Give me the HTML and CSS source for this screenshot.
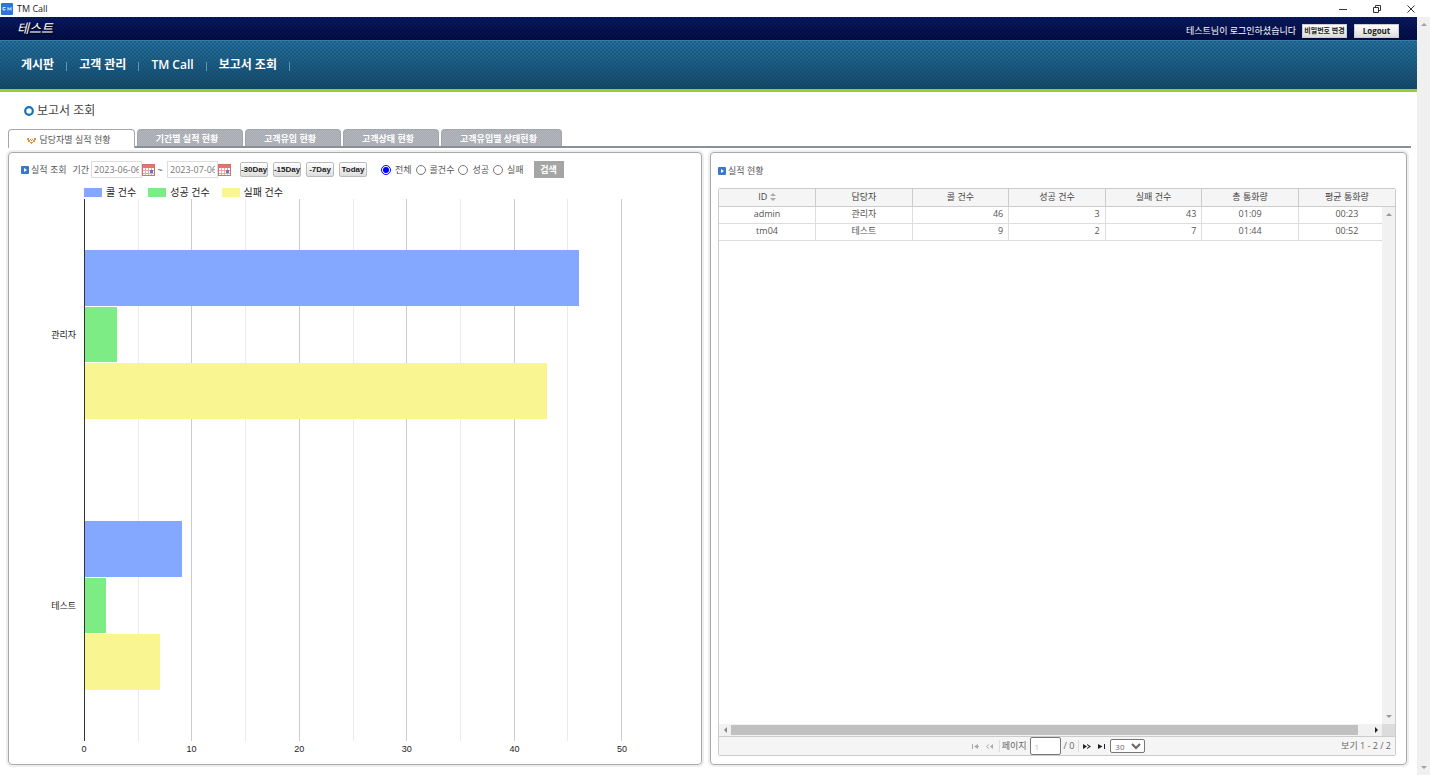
FILE: index.html
```html
<!DOCTYPE html>
<html lang="ko">
<head>
<meta charset="utf-8">
<title>TM Call</title>
<link rel="stylesheet" href="styles.css">
</head>
<body>
<div class="titlebar">
  <svg class="app-icon" viewBox="0 0 12 12"><rect width="12" height="12" rx="1" fill="#2f73de"/><path d="M4.500 4.500H2v2.500h2V6M7 7.500v-3l1.500 2 1.500-2v3" fill="none" stroke="#dcecff"/></svg>
  <span class="app-name">TM Call</span>
  <div class="window-controls">
    <button type="button" aria-label="Minimize"><svg viewBox="0 0 10 10"><path d="M1 5.500h8" /></svg></button>
    <button type="button" aria-label="Restore"><svg viewBox="0 0 10 10"><path d="M1.500 3.500h5v5h-5zM3.500 3V1.500h5v5H7" /></svg></button>
    <button type="button" aria-label="Close"><svg viewBox="0 0 10 10"><path d="M1.500 1.500l7 7M8.500 1.500l-7 7" /></svg></button>
  </div>
</div>
<div class="viewport">
  <div class="page">
    <header class="topbar">
      <div class="logo">테스트</div>
      <div class="user">
        <span class="greeting">테스트님이 로그인하셨습니다</span>
        <button type="button" class="top-button">비밀번호 변경</button>
        <button type="button" class="top-button logout">Logout</button>
      </div>
    </header>
    <nav class="menu">
      <a href="#board">게시판</a><a href="#customers">고객 관리</a><a href="#tmcall">TM Call</a><a href="#reports">보고서 조회</a>
    </nav>
    <main class="content">
      <h1 class="page-title"><svg viewBox="0 0 10 10"><circle cx="5" cy="5" r="3.800" fill="#fff" stroke="#1672b8" stroke-width="2.200"/></svg>보고서 조회</h1>
      <div class="tabs">
        <button type="button" class="tab active"><svg viewBox="0 0 9 6"><path d="M0 0h2v2H0zM7 0h2v2H7zM3 1h1v1H3zM5 1h1v1H5zM1 2h2v2H1zM6 2h2v2H6zM4 2h1v1H4zM3 4h3v1H3zM4 5h1v1H4z" fill="#e8943a"/></svg>담당자별 실적 현황</button>
        <button type="button" class="tab tab-m">기간별 실적 현황</button>
        <button type="button" class="tab tab-s">고객유입 현황</button>
        <button type="button" class="tab tab-s">고객상태 현황</button>
        <button type="button" class="tab tab-l">고객유입별 상태현황</button>
      </div>
      <div class="panels">
        <section class="panel chart-panel">
          <form class="filter">
            <h2 class="section-title"><svg viewBox="0 0 8 8"><rect width="8" height="8" rx="1" fill="#3a78cc"/><path d="M3 2l3 2-3 2z" fill="#fff"/></svg>실적 조회</h2>
            <div class="period">
              <label for="from">기간</label>
              <input id="from" class="date" type="text" value="2023-06-06">
              <button type="button" class="calendar" aria-label="시작일"><svg viewBox="0 0 13 12"><rect x=".5" y=".5" width="12" height="11" fill="#fff" stroke="#d47070"/><path d="M1 1h11v3H1z" fill="#df7770"/><path d="M1 6.500h11M1 9.500h11M3.500 4v7M6.500 4v7M9.500 4v7" stroke="#e6aaa8"/><path d="M8 6h3v3H8z" fill="#6677bd"/></svg></button>
              <span class="tilde">~</span>
              <input class="date" type="text" value="2023-07-06" aria-label="종료일">
              <button type="button" class="calendar" aria-label="종료일 선택"><svg viewBox="0 0 13 12"><rect x=".5" y=".5" width="12" height="11" fill="#fff" stroke="#d47070"/><path d="M1 1h11v3H1z" fill="#df7770"/><path d="M1 6.500h11M1 9.500h11M3.500 4v7M6.500 4v7M9.500 4v7" stroke="#e6aaa8"/><path d="M8 6h3v3H8z" fill="#6677bd"/></svg></button>
            </div>
            <div class="presets">
              <button type="button">-30Day</button>
              <button type="button">-15Day</button>
              <button type="button">-7Day</button>
              <button type="button">Today</button>
            </div>
            <div class="kinds">
              <label><input type="radio" name="kind" checked>전체</label>
              <label><input type="radio" name="kind">콜건수</label>
              <label><input type="radio" name="kind">성공</label>
              <label><input type="radio" name="kind">실패</label>
            </div>
            <button type="submit" class="search">검색</button>
          </form>
          <div class="chart">
            <ul class="legend">
              <li><i class="swatch calls"></i>콜 건수</li>
              <li><i class="swatch wins"></i>성공 건수</li>
              <li><i class="swatch fails"></i>실패 건수</li>
            </ul>
            <div class="names"><span>관리자</span><span>테스트</span></div>
            <div class="plot">
              <div class="grid"><i></i><i></i><i></i><i></i><i></i><i></i><i></i><i></i><i></i><i></i></div>
              <div class="group">
                <div class="bar calls" style="width:92%"></div>
                <div class="bar wins" style="width:6%"></div>
                <div class="bar fails" style="width:86%"></div>
              </div>
              <div class="group">
                <div class="bar calls" style="width:18%"></div>
                <div class="bar wins" style="width:4%"></div>
                <div class="bar fails" style="width:14%"></div>
              </div>
            </div>
            <div class="axis"><span>0</span><span>10</span><span>20</span><span>30</span><span>40</span><span>50</span></div>
          </div>
        </section>
        <section class="panel table-panel">
          <h2 class="section-title"><svg viewBox="0 0 8 8"><rect width="8" height="8" rx="1" fill="#3a78cc"/><path d="M3 2l3 2-3 2z" fill="#fff"/></svg>실적 현황</h2>
          <div class="datagrid">
            <table>
              <thead>
                <tr><th>ID <svg class="sort" viewBox="0 0 6 8"><path d="M0 3l3-3 3 3zM0 5l3 3 3-3z" fill="#aaa"/></svg></th><th>담당자</th><th>콜 건수</th><th>성공 건수</th><th>실패 건수</th><th>총 통화량</th><th>평균 통화량</th></tr>
              </thead>
              <tbody>
                <tr><td>admin</td><td>관리자</td><td class="num">46</td><td class="num">3</td><td class="num">43</td><td>01:09</td><td>00:23</td></tr>
                <tr><td>tm04</td><td>테스트</td><td class="num">9</td><td class="num">2</td><td class="num">7</td><td>01:44</td><td>00:52</td></tr>
              </tbody>
            </table>
            <div class="vscroll"><svg viewBox="0 0 6 4"><path d="M0 4l3-3 3 3z"/></svg><svg viewBox="0 0 6 4"><path d="M0 0l3 3 3-3z"/></svg></div>
            <div class="hscroll"><svg viewBox="0 0 4 6"><path d="M4 0L1 3l3 3z"/></svg><div class="thumb"></div><svg class="dark" viewBox="0 0 4 6"><path d="M0 0l3 3-3 3z"/></svg><div class="corner"></div></div>
            <div class="pager">
              <div class="pager-nav">
                <button type="button" aria-label="처음" disabled><svg viewBox="0 0 9 6"><path d="M1 1h1v5H1zM7 1v5L3 3.500zM7 3h1v1H7z"/></svg></button>
                <button type="button" aria-label="이전" disabled><svg viewBox="0 0 9 6"><path d="M8 1v5L5 3.500zM4 1v1L2 3.500 4 5v1L1 3.500z"/></svg></button>
                <label for="pageno">페이지</label>
                <input id="pageno" type="text" value="1">
                <span class="total">/ 0</span>
                <button type="button" aria-label="다음"><svg viewBox="0 0 9 6"><path d="M1 1v5l4-2.500zM5 1v1l2 1.500L5 5v1l4-2.500z"/></svg></button>
                <button type="button" aria-label="마지막"><svg viewBox="0 0 9 6"><path d="M1 1v5l4.500-2.500zM7 1h1v5H7z"/></svg></button>
                <select aria-label="표시 개수"><option>30</option></select>
              </div>
              <div class="range">보기 1 - 2 / 2</div>
            </div>
          </div>
        </section>
      </div>
    </main>
  </div>
  <div class="page-scroll"><svg viewBox="0 0 6 4"><path d="M0 4l3-3 3 3z"/></svg><svg viewBox="0 0 6 4"><path d="M0 0l3 3 3-3z"/></svg></div>
</div>
</body>
</html>
```
FILE: styles.css
```css
* { box-sizing: border-box; }
body {
  margin: 0;
  min-height: 100vh;
  display: flex;
  flex-direction: column;
  background: #fff;
  color: #555;
  font: 9px/12px "Open Sans", "Noto Sans CJK KR", sans-serif;
}
button, input, select { font: inherit; color: inherit; margin: 0; padding: 0; }
button { border: 0; background: none; white-space: nowrap; }
svg { display: block; flex: none; }
h1, h2, ul { margin: 0; padding: 0; font-weight: 400; list-style: none; }
label, span, th, td, li { white-space: nowrap; }

.titlebar { display: flex; align-items: center; height: 17px; padding: 0 14px 0 1px; }
.app-icon { width: 12px; height: 12px; margin-right: 4px; }
.app-name { color: #222; font-size: 9px; }
.window-controls { display: flex; gap: 24px; margin-left: auto; }
.window-controls svg { width: 10px; height: 10px; fill: none; stroke: #333; }

.viewport { flex: 1; display: flex; }
.page { flex: 1; display: flex; flex-direction: column; min-width: 0; }
.page-scroll {
  flex: none;
  width: 13px;
  display: flex;
  flex-direction: column;
  justify-content: space-between;
  align-items: center;
  padding: 5px 0;
  background: #f0f0f0;
  fill: #a0a0a0;
}
.page-scroll svg, .vscroll svg { width: 6px; height: 4px; }

.topbar {
  display: flex;
  justify-content: space-between;
  align-items: center;
  height: 23px;
  padding: 0 18px 0 17px;
  color: #fff;
  background:
    repeating-conic-gradient(#00062e66 0 25%, transparent 0 50%) 0 0 / 4px 4px,
    linear-gradient(#0a1c66, #020d45);
}
.logo { padding-bottom: 2px; font-size: 13px; font-style: italic; line-height: 20px; text-shadow: 1px 1px 1px #000; }
.user { display: flex; align-items: center; padding-top: 4px; }
.greeting { margin-right: 6px; font-size: 9px; }
.top-button {
  width: 45px;
  height: 14px;
  color: #222;
  background: linear-gradient(#fff, #dcdcdc);
  border: 1px solid #ccc;
  font-size: 7px;
  font-weight: 700;
  line-height: 12px;
}
.logout { margin-left: 7px; font-size: 8px; }

.menu {
  display: flex;
  align-items: center;
  height: 52px;
  padding: 0 9px;
  border-top: 1px solid #3d7aa0;
  border-bottom: 3px solid #9acd32;
  background:
    repeating-conic-gradient(#0a365a44 0 25%, transparent 0 50%) 0 0 / 4px 4px,
    linear-gradient(#24709c, #144868);
}
.menu a {
  display: flex;
  align-items: center;
  color: #fff;
  font-size: 12px;
  font-weight: 600;
  line-height: 18px;
  text-decoration: none;
  padding-left: 12px;
}
.menu a::after { content: ""; width: 1px; height: 9px; margin: 3px 0 0 12px; background: #5b94b4; }

.content { flex: 1; display: flex; flex-direction: column; padding: 0 6px 10px 8px; }
.page-title {
  display: flex;
  align-items: center;
  gap: 3px;
  height: 37px;
  padding-left: 16px;
  color: #444;
  font-size: 12px;
  line-height: 18px;
}
.page-title svg { width: 10px; height: 10px; }

.tabs { display: flex; align-items: flex-end; gap: 2px; height: 19px; border-bottom: 2px solid #8b8f98; }
.tab {
  height: 17px;
  padding-right: 6px;
  color: #fff;
  font-size: 9px;
  font-weight: 700;
  line-height: 17px;
  border: 1px solid #a3a6ac;
  border-bottom: 0;
  border-radius: 4px 4px 0 0;
  background: repeating-conic-gradient(#a6a9b0 0 25%, #b4b7bd 0 50%) 0 0 / 2px 2px;
}
.tab.active {
  display: flex;
  align-items: center;
  justify-content: center;
  gap: 4px;
  width: 127px;
  height: 19px;
  margin-bottom: -2px;
  color: #555;
  font-weight: 400;
  background: #fff;
}
.tab.active svg { width: 9px; height: 6px; margin-top: 3px; }
.tab-s { width: 96px; }
.tab-m { width: 106px; }
.tab-l { width: 121px; }

.panels { flex: 1; display: grid; grid-template-columns: 694fr 697fr; gap: 8px; padding: 4px 4px 0 0; }
.panel {
  min-width: 0;
  display: flex;
  flex-direction: column;
  border: 1px solid #aaa;
  border-radius: 4px;
  box-shadow: 0 0 0 2px #eee;
}
.section-title { display: flex; align-items: center; gap: 2px; font-size: 9px; white-space: nowrap; }
.section-title svg { width: 8px; height: 8px; }

.filter { display: flex; align-items: center; height: 17px; margin: 8px 12px 0; }
.period { display: flex; align-items: center; margin-left: 6px; }
.date { width: 51px; height: 17px; margin-left: 2px; padding: 0 2px; color: #777; border: 1px solid #ddd; }
.calendar svg { width: 13px; height: 12px; }
.tilde { width: 10px; text-align: center; }
.presets { display: flex; gap: 5px; margin-left: 9px; }
.presets button {
  width: 28px;
  height: 15px;
  color: #222;
  border: 1px solid #bbb;
  border-radius: 2px;
  background: linear-gradient(#fff, #ddd);
  font: 700 8px/12px "Liberation Sans", sans-serif;
  display: flex;
  align-items: center;
  justify-content: center;
}
.kinds { display: flex; gap: 4px; margin-left: 14px; }
.kinds label { display: flex; align-items: center; gap: 4px; }
.kinds input { width: 10px; height: 10px; accent-color: #00f; }
.search { width: 30px; height: 17px; margin-left: 10px; color: #fff; background: #a5a5a5; font-weight: 700; }

.chart {
  flex: 1;
  display: grid;
  grid-template-columns: 75px 1fr;
  grid-template-rows: 21px 1fr 23px;
  padding-right: 79px;
}
.legend { grid-column: 2; display: flex; align-items: center; gap: 12px; padding-top: 7px; color: #222; font-size: 10px; }
.legend li { display: flex; align-items: center; gap: 4px; }
.swatch { width: 18px; height: 9px; }
.calls { background: #84a7ff; }
.wins { background: #7eec84; }
.fails { background: #f9f590; }
.names { display: flex; flex-direction: column; padding-right: 8px; color: #222; font-size: 9px; }
.names span { flex: 1; display: flex; align-items: center; justify-content: flex-end; }
.plot { position: relative; display: flex; flex-direction: column; }
.grid { position: absolute; inset: 0; display: flex; border-left: 1px solid #333; }
.grid i { flex: 1; border-right: 1px solid #ebebeb; }
.grid i:nth-child(even) { border-color: #ccc; }
.group { position: relative; flex: 1; display: flex; flex-direction: column; justify-content: center; gap: 1px; margin-left: 1px; }
.bar { height: 20.5%; }
.axis { grid-column: 2; display: flex; justify-content: space-between; padding-top: 2px; color: #222; font: 9px/12px "Liberation Sans", sans-serif; }
.axis span { width: 0; display: flex; justify-content: center; }

.table-panel { padding: 12px 10px 8px 7px; }
.datagrid { position: relative; flex: 1; display: flex; flex-direction: column; margin-top: 11px; border: 1px solid #ccc; border-radius: 2px; }
table { width: 100%; border-collapse: collapse; table-layout: fixed; }
th, td { height: 17px; padding: 0 5px; line-height: 12px; text-align: center; border-right: 1px solid #ddd; border-bottom: 1px solid #ddd; }
td { padding-bottom: 2px; }
th { color: #444; font-weight: 400; background: #f5f5f5; border-color: #ccc; }
th:last-child, td:last-child { border-right: 0; }
.num { text-align: right; }
.sort { display: inline-block; width: 6px; height: 8px; vertical-align: -1px; }
.vscroll {
  position: absolute;
  top: 18px;
  right: 0;
  bottom: 31px;
  width: 13px;
  display: flex;
  flex-direction: column;
  justify-content: space-between;
  align-items: center;
  padding: 5px 0;
  background: #f1f1f1;
  fill: #999;
}
.hscroll { display: flex; align-items: center; height: 12px; margin-top: auto; padding-left: 4px; background: #f1f1f1; fill: #888; }
.hscroll svg { width: 4px; height: 6px; }
.hscroll .dark { fill: #222; margin-right: 3px; }
.thumb { flex: 1; height: 10px; margin: 0 17px 0 4px; background: #c0c0c0; }
.corner { width: 13px; height: 12px; background: #dcdcdc; }
.pager {
  display: grid;
  grid-template-columns: 1fr auto 1fr;
  align-items: center;
  height: 19px;
  padding-right: 4px;
  color: #666;
  background: #f5f5f5;
  border-top: 1px solid #ccc;
}
.pager-nav { grid-column: 2; display: flex; align-items: center; padding-left: 4px; }
.pager-nav button { width: 15px; height: 12px; display: flex; align-items: center; justify-content: center; fill: #222; }
.pager-nav button:disabled { width: 14px; fill: #aaa; }
.pager-nav svg { width: 9px; height: 6px; }
.pager-nav label { margin-left: 2px; padding-left: 2px; border-left: 1px solid #ddd; }
.pager-nav input { width: 31px; height: 18px; margin: 0 3px; padding: 0 4px; color: #bbb; border: 1px solid #777; border-radius: 2px; font-size: 8px; }
.total { padding-right: 4px; border-right: 1px solid #ddd; }
.pager-nav select { width: 35px; height: 14px; margin-left: 1px; background: #fff; border: 1px solid #777; border-radius: 2px; font-size: 8px; }
.range { text-align: right; }
```
